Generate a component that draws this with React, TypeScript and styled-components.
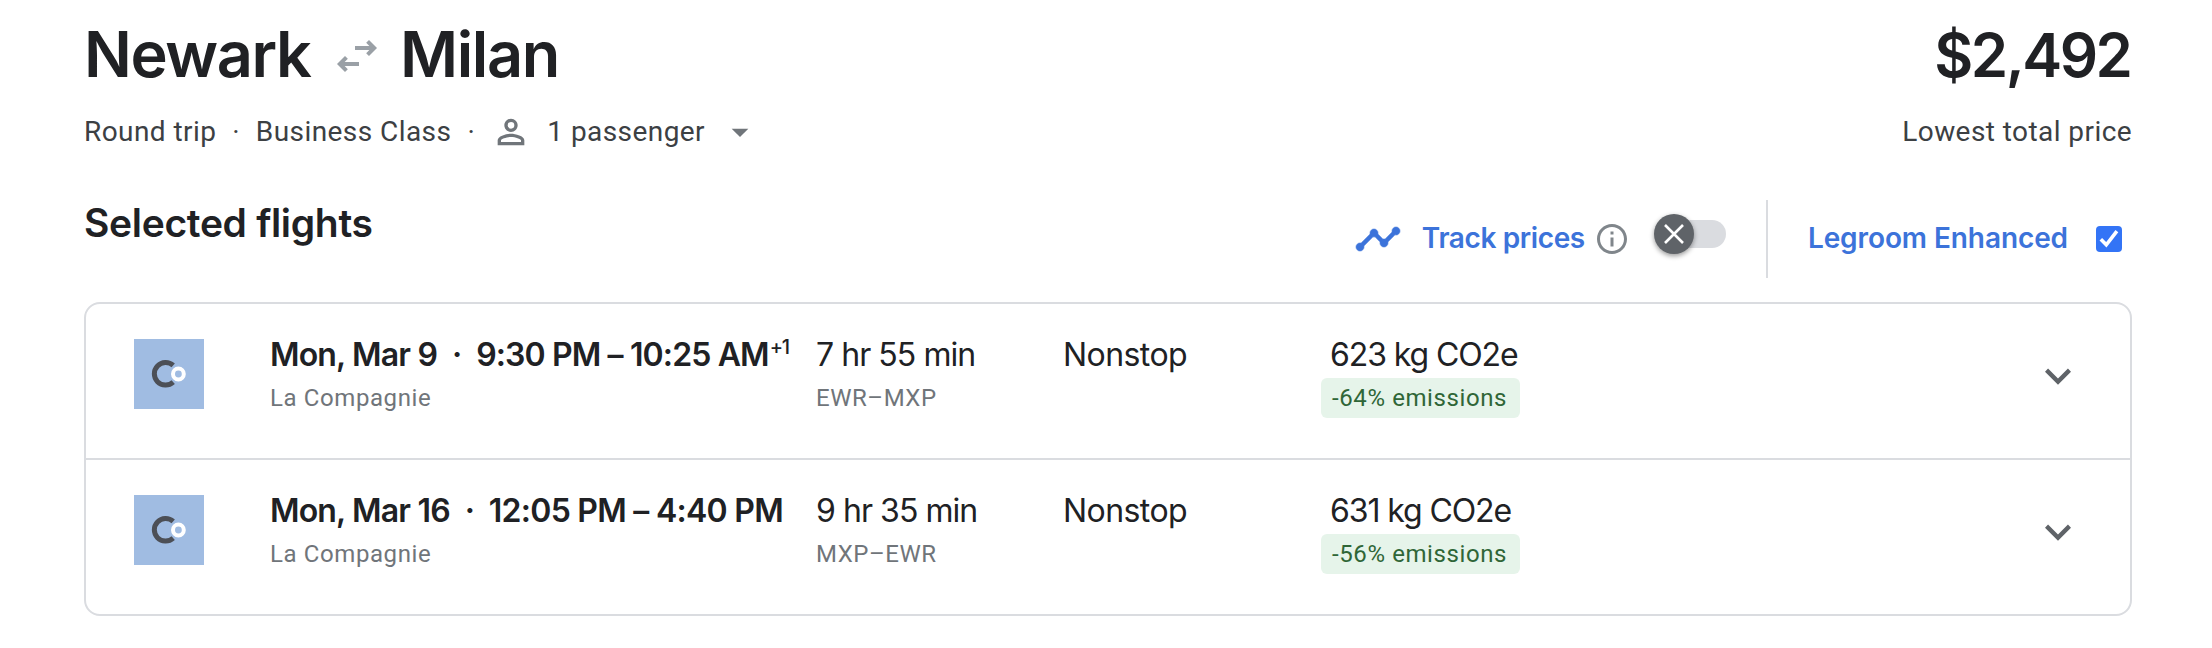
import React from "react";
import styled, { createGlobalStyle } from "styled-components";

const Global = createGlobalStyle`
  * { box-sizing: border-box; }
  body { margin: 0; background: #fff; color: #202124; font-family: Roboto, "Liberation Sans", sans-serif; }
`;

const display = `font-family: Inter, "Liberation Sans", sans-serif;`;

const Page = styled.main`
  height: 648px;
  padding: 22px 80px 0 84px;
  overflow: hidden;
`;

const Header = styled.header`
  display: flex;
  justify-content: space-between;
  height: 66px;
`;

const Title = styled.h1`
  ${display}
  display: flex;
  align-items: center;
  height: 66px;
  margin: -1px 0 0;
  font-size: 63px;
  line-height: 66px;
  font-weight: 600;
  letter-spacing: -1.4px;
`;

const Price = styled.div`
  ${display}
  margin-right: 1.5px;
  font-size: 60px;
  line-height: 66px;
  font-weight: 600;
  letter-spacing: -2.5px;
`;

const Meta = styled.div`
  display: flex;
  justify-content: space-between;
  height: 44px;
  margin-top: 22px;
  font-size: 28px;
  line-height: 44px;
  letter-spacing: 0.43px;
  color: #3c4043;
`;

const Details = styled.div`
  display: flex;
  align-items: center;
`;

const Dot = styled.span<{ $w: number }>`
  display: inline-block;
  width: ${p => p.$w}px;
  text-align: center;
`;

const Tools = styled.section`
  display: flex;
  justify-content: space-between;
  height: 148px;
`;

const Heading = styled.h2`
  ${display}
  margin: 43px 0 0;
  font-size: 39px;
  line-height: 52px;
  font-weight: 600;
  letter-spacing: -0.32px;
`;

const Actions = styled.div`
  display: flex;
  align-items: center;
  height: 78px;
  margin-top: 46px;
  padding-right: 10px;
  color: #3c73da;
`;

const Label = styled.span<{ $ls: number }>`
  ${display}
  margin-top: -2px;
  font-size: 28px;
  line-height: 36px;
  font-weight: 600;
  letter-spacing: ${p => p.$ls}px;
`;

const Switch = styled.div`
  display: flex;
  align-items: center;
  width: 72px;
  height: 40px;
  margin: -10px 40px 0 24px;
`;

const Thumb = styled.div`
  z-index: 1;
  flex: none;
  width: 40px;
  height: 40px;
  border-radius: 50%;
  background: #5f6368;
  box-shadow: 0 2px 5px rgba(0, 0, 0, 0.4);
`;

const Track = styled.div`
  flex: none;
  width: 60px;
  height: 28px;
  margin-left: -28px;
  border-radius: 14px;
  background: #dadce0;
`;

const Rule = styled.div`
  width: 2px;
  height: 78px;
  margin-right: 40px;
  background: #dadce0;
`;

const Checkbox = styled.div`
  width: 26px;
  height: 26px;
  margin-left: 28px;
  border-radius: 4px;
  background: #3374f6;
`;

const Card = styled.section`
  width: 2048px;
  border: 2px solid #dadce0;
  border-radius: 16px;
`;

const Row = styled.article`
  display: grid;
  grid-template-columns: 136px 546px 247px 258px 1fr 52px;
  height: 154px;
  padding: 0 46px 0 48px;
  & + & {
    height: 156px;
    border-top: 2px solid #dadce0;
  }
`;

const Cell = styled.div`
  padding-top: 31px;
  white-space: nowrap;
`;

const Main = styled.div<{ $bold?: boolean; $ls?: number; $indent?: number }>`
  ${display}
  height: 40px;
  padding-left: ${p => p.$indent ?? 0}px;
  font-size: 32px;
  line-height: 40px;
  font-weight: ${p => (p.$bold ? 600 : 400)};
  letter-spacing: ${p => p.$ls ?? -0.82}px;
`;

const Time = styled.span<{ $ls: number }>`
  letter-spacing: ${p => p.$ls}px;
`;

const NextDay = styled.sup`
  margin-left: 1px;
  font-size: 20px;
  line-height: 0;
  vertical-align: 12px;
  font-weight: 500;
  letter-spacing: -1.4px;
`;

const Sub = styled.div<{ $ls: number }>`
  margin-top: 3px;
  font-size: 24px;
  line-height: 40px;
  letter-spacing: ${p => p.$ls}px;
  color: #70757a;
`;

const Chip = styled.div`
  width: 199px;
  height: 40px;
  margin-top: 3px;
  padding-left: 11px;
  border-radius: 6px;
  background: #e6f4ea;
  color: #2f6637;
  font-size: 24px;
  line-height: 40px;
  letter-spacing: 0.6px;
`;

const Logo = styled.svg`
  display: block;
  width: 70px;
  height: 70px;
  margin-top: 35px;
`;

const Icon = styled.svg<{ $s: number; $m?: string }>`
  display: block;
  flex: none;
  width: ${p => p.$s}px;
  height: ${p => p.$s}px;
  margin: ${p => p.$m ?? 0};
  fill: currentColor;
`;

const flights = [
  { date: "Mon, Mar 9", time: "9:30 PM – 10:25 AM", tracking: -0.87, next: "+1", duration: "7 hr 55 min", route: "EWR–MXP", co2: "623 kg CO2e", diff: "-64% emissions" },
  { date: "Mon, Mar 16", time: "12:05 PM – 4:40 PM", tracking: -0.74, next: "", duration: "9 hr 35 min", route: "MXP–EWR", co2: "631 kg CO2e", diff: "-56% emissions" },
];

function AirlineLogo() {
  return (
    <Logo viewBox="0 0 70 70">
      <path fill="#a0bce2" d="M0 0h70v70H0z" />
      <path d="M39.2 26.4A11.3 11.3 0 1 0 39.2 43.2" fill="none" stroke="#4c4f56" strokeWidth="5" />
      <circle cx="44.4" cy="35" r="5.400" fill="#a0bce2" stroke="#fff" strokeWidth="4" />
    </Logo>
  );
}

export default function App() {
  return (
    <Page>
      <Global />
      <Header>
        <Title>
          <span>Newark</span>
          <Icon $s={48} $m="4px 19.5px 0 22px" viewBox="0 0 24 24" color="#9aa0a6">
            <path d="M22 8l-4-4-1.410 1.410L18.170 7H11v2h7.170l-1.590 1.590L18 12l4-4zM2 16l4 4 1.410-1.410L5.830 17H13v-2H5.830l1.590-1.590L6 12l-4 4z" />
          </Icon>
          <span>Milan</span>
        </Title>
        <Price>$2,492</Price>
      </Header>
      <Meta>
        <Details>
          <span>Round trip</span>
          <Dot $w={39.5}>·</Dot>
          <span>Business Class</span>
          <Dot $w={40}>·</Dot>
          <Icon $s={40} $m="0 16px 0 0" viewBox="0 0 24 24" color="#70757a">
            <path d="M12 4C9.790 4 8 5.790 8 8s1.790 4 4 4 4-1.790 4-4-1.790-4-4-4zm0 2a2 2 0 1 1 0 4 2 2 0 0 1 0-4zm0 7c-2.670 0-8 1.340-8 4v3h16v-3c0-2.660-5.330-4-8-4zm6 5H6v-.99c.2-.72 3.300-2.010 6-2.010s5.800 1.290 6 2v1z" />
          </Icon>
          <span>1 passenger</span>
          <Icon $s={40} $m="0 0 0 15.5px" viewBox="0 0 24 24" color="#70757a">
            <path d="M7 10l5 5 5-5z" />
          </Icon>
        </Details>
        <span>Lowest total price</span>
      </Meta>
      <Tools>
        <Heading>Selected flights</Heading>
        <Actions>
          <Icon $s={48} $m="0 20px 0 0" viewBox="0 0 24 24" stroke="currentColor" strokeWidth="0.3">
            <path d="M23 8c0 1.100-.9 2-2 2-.18 0-.35-.02-.51-.07l-3.560 3.550c.05.16.07.34.07.52 0 1.100-.9 2-2 2s-2-.9-2-2c0-.18.02-.36.07-.52l-2.550-2.550c-.16.05-.34.07-.52.07s-.36-.02-.52-.07l-4.550 4.560c.05.16.07.33.07.51 0 1.100-.9 2-2 2s-2-.9-2-2 .9-2 2-2c.18 0 .35.02.51.07l4.560-4.550C8.020 9.360 8 9.180 8 9c0-1.100.9-2 2-2s2 .9 2 2c0 .18-.02.36-.07.52l2.550 2.550c.16-.05.34-.07.52-.07s.36.02.52.07l3.550-3.560C19.020 8.350 19 8.180 19 8c0-1.100.9-2 2-2s2 .9 2 2z" />
          </Icon>
          <Label $ls={-0.38}>Track prices</Label>
          <Icon $s={36} $m="0 0 0 9px" viewBox="0 0 24 24" color="#80868b">
            <path d="M11 7h2v2h-2zm0 4h2v6h-2zm1-9C6.480 2 2 6.480 2 12s4.480 10 10 10 10-4.480 10-10S17.520 2 12 2zm0 18c-4.410 0-8-3.590-8-8s3.590-8 8-8 8 3.590 8 8-3.590 8-8 8z" />
          </Icon>
          <Switch>
            <Thumb>
              <Icon $s={40} viewBox="0 0 40 40">
                <path d="M11 11L29 29M29 11L11 29" fill="none" stroke="#fff" strokeWidth="2.600" />
              </Icon>
            </Thumb>
            <Track />
          </Switch>
          <Rule />
          <Label $ls={-0.09}>Legroom Enhanced</Label>
          <Checkbox>
            <Icon $s={26} viewBox="0 0 26 26">
              <path d="M4.800 13.300L10.300 18.800L20.900 5.200" fill="none" stroke="#fff" strokeWidth="3.600" />
            </Icon>
          </Checkbox>
        </Actions>
      </Tools>
      <Card>
        {flights.map(f => (
          <Row key={f.date}>
            <AirlineLogo />
            <Cell>
              <Main $bold>
                {f.date}
                <Dot $w={39}>·</Dot>
                <Time $ls={f.tracking}>{f.time}</Time>
                {f.next && <NextDay>{f.next}</NextDay>}
              </Main>
              <Sub $ls={0.6}>La Compagnie</Sub>
            </Cell>
            <Cell>
              <Main $ls={-0.95}>{f.duration}</Main>
              <Sub $ls={0.55}>{f.route}</Sub>
            </Cell>
            <Cell>
              <Main $ls={-0.57}>Nonstop</Main>
            </Cell>
            <Cell>
              <Main $ls={-1.1} $indent={9}>{f.co2}</Main>
              <Chip>{f.diff}</Chip>
            </Cell>
            <Icon $s={52} $m="46px 0 0" viewBox="0 0 24 24" color="#5f6368">
              <path d="M16.590 8.590L12 13.170 7.410 8.590 6 10l6 6 6-6z" />
            </Icon>
          </Row>
        ))}
      </Card>
    </Page>
  );
}
